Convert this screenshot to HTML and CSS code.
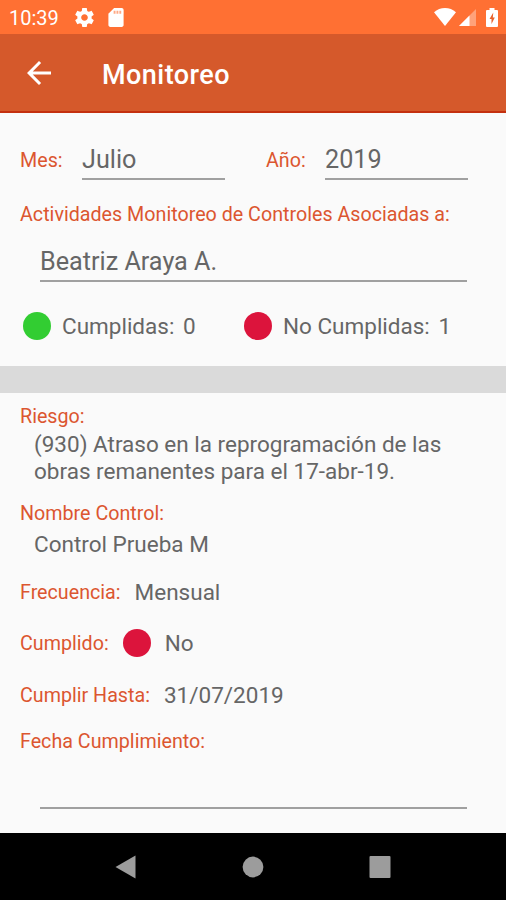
FILE: index.html
```html
<!DOCTYPE html>
<html lang="es">
<head>
    <meta charset="UTF-8">
    <meta name="viewport" content="width=device-width, initial-scale=1.0">
    <title>Monitoreo</title>
    <link rel="stylesheet" href="styles.css">
</head>
<body>
    <div class="status-bar">
        <span class="clock">10:39</span>
        <svg class="gear" viewBox="2 2 20 20"><path fill="#fff" d="M19.43 12.98c.04-.32.07-.64.07-.98s-.03-.66-.07-.98l2.11-1.65c.19-.15.24-.42.12-.64l-2-3.46c-.12-.22-.39-.3-.61-.22l-2.49 1c-.52-.4-1.08-.73-1.69-.98l-.38-2.65C14.46 2.18 14.25 2 14 2h-4c-.25 0-.46.18-.49.42l-.38 2.65c-.61.25-1.17.59-1.69.98l-2.49-1c-.23-.09-.49 0-.61.22l-2 3.46c-.13.22-.07.49.12.64l2.11 1.65c-.04.32-.07.65-.07.98s.03.66.07.98l-2.11 1.65c-.19.15-.24.42-.12.64l2 3.46c.12.22.39.3.61.22l2.49-1c.52.4 1.08.73 1.69.98l.38 2.65c.03.24.24.42.49.42h4c.25 0 .46-.18.49-.42l.38-2.65c.61-.25 1.17-.59 1.69-.98l2.49 1c.23.09.49 0 .61-.22l2-3.46c.12-.22.07-.49-.12-.64l-2.11-1.65zM12 15.5c-1.93 0-3.5-1.57-3.5-3.5s1.57-3.5 3.5-3.5 3.5 1.57 3.5 3.5-1.57 3.5-3.5 3.5z"/></svg>
        <svg class="sd-card" viewBox="4 2 16 20"><path fill="#fff" d="M18 2h-8L4 8v12c0 1.1.9 2 2 2h12c1.1 0 2-.9 2-2V4c0-1.1-.9-2-2-2z"/><path fill="#ff7033" fill-opacity=".6" d="M9.5 5h2v3h-2zM12.500 5h2v3h-2zM15.500 5h2v3h-2z"/></svg>
        <div class="status-icons">
            <svg class="wifi" viewBox="0 0 22 18"><path fill="#fff" d="M0 4.300C3 1.500 7 0 11 0s8 1.500 11 4.300L11 18z"/></svg>
            <svg class="signal" viewBox="0 0 17 17"><path fill="#fff" fill-opacity=".35" d="M17 0v17H0z"/><path fill="#fff" d="M10.500 6.500V17H0z"/></svg>
            <svg class="battery" viewBox="0 0 12 19"><path fill="#fff" d="M3.500 0h5v2H11a1 1 0 0 1 1 1v15a1 1 0 0 1-1 1H1a1 1 0 0 1-1-1V3a1 1 0 0 1 1-1h2.500z"/><path fill="#e8622c" d="M7.300 4.500L3.500 11h2v5l3.300-6.500h-2z"/></svg>
        </div>
    </div>
    <header class="app-bar">
        <svg class="back" viewBox="4 4 16 16"><path fill="#fff" d="M20 11H7.830l5.590-5.590L12 4l-8 8 8 8 1.410-1.410L7.830 13H20z"/></svg>
        <h1>Monitoreo</h1>
    </header>
    <main>
        <section class="summary">
            <div class="period">
                <span class="label label-month">Mes:</span>
                <span class="input">Julio</span>
                <span class="label label-year">Año:</span>
                <span class="input">2019</span>
            </div>
            <p class="label label-person">Actividades Monitoreo de Controles Asociadas a:</p>
            <div class="input input-wide">Beatriz Araya A.</div>
            <div class="counts">
                <span class="dot green"></span>
                <span class="value done">Cumplidas: <b>0</b></span>
                <span class="dot red"></span>
                <span class="value pending">No Cumplidas: <b>1</b></span>
            </div>
        </section>
        <section class="detail">
            <p class="label">Riesgo:</p>
            <p class="value text risk">(930) Atraso en la reprogramación de las<br>obras remanentes para el 17-abr-19.</p>
            <p class="label label-control">Nombre Control:</p>
            <p class="value text control">Control Prueba M</p>
            <div class="row frequency">
                <span class="label">Frecuencia:</span>
                <span class="value">Mensual</span>
            </div>
            <div class="row fulfilled">
                <span class="label">Cumplido:</span>
                <span class="dot red"></span>
                <span class="value">No</span>
            </div>
            <div class="row due">
                <span class="label">Cumplir Hasta:</span>
                <span class="value">31/07/2019</span>
            </div>
            <p class="label label-date">Fecha Cumplimiento:</p>
            <div class="input input-wide input-date"></div>
        </section>
    </main>
    <nav class="nav-bar">
        <svg viewBox="0 0 22 24"><path fill="#9c9c9c" d="M20.500 .500V23.500L.500 12z"/></svg>
        <svg viewBox="0 0 22 24"><circle cx="11" cy="12" r="10.400" fill="#9c9c9c"/></svg>
        <svg viewBox="0 0 22 24"><rect x=".5" y="1" width="21" height="22" rx="1" fill="#9c9c9c"/></svg>
    </nav>
</body>
</html>
```
FILE: styles.css
```css
* {
    margin: 0;
    padding: 0;
    box-sizing: border-box;
}
body {
    width: 506px;
    height: 900px;
    overflow: hidden;
    font-family: Roboto, sans-serif;
    background-color: #fafafa;
    color: #666;
    white-space: nowrap;
}
svg {
    display: block;
    flex: none;
}
.status-bar {
    display: flex;
    align-items: center;
    height: 34px;
    padding: 0 8px 0 9px;
    background-color: #ff7033;
    color: #fff;
}
.clock {
    width: 66px;
    font-size: 20px;
    padding-top: 2px;
}
.gear {
    width: 19px;
    height: 19px;
}
.sd-card {
    width: 16px;
    height: 19px;
    margin-left: 14px;
}
.status-icons {
    display: flex;
    align-items: center;
    margin-left: auto;
}
.wifi {
    width: 22px;
    height: 18px;
}
.signal {
    width: 17px;
    height: 17px;
    margin-left: 3px;
}
.battery {
    width: 12px;
    height: 19px;
    margin-left: 10px;
}
.app-bar {
    display: flex;
    align-items: center;
    height: 79px;
    padding-left: 27px;
    background-color: #d5592b;
    border-bottom: 2px solid #c4300f;
    color: #fff;
}
.back {
    width: 24px;
    height: 24px;
}
h1 {
    margin-left: 51px;
    padding-top: 4px;
    font-size: 27px;
    font-weight: 500;
    letter-spacing: 0.45px;
}
.label {
    padding-top: 2px;
    font-size: 19.7px;
    line-height: 22px;
    color: #dc5630;
}
.value {
    font-size: 22.5px;
    line-height: 27px;
}
.input {
    width: 143px;
    height: 40px;
    font-size: 25.2px;
    line-height: 40px;
    border-bottom: 2px solid #a0a0a0;
}
.input-wide {
    width: 427px;
    margin-left: 20px;
}
.dot {
    width: 28px;
    height: 28px;
    border-radius: 50%;
}
.green {
    background-color: #32cd32;
}
.red {
    background-color: #dc143c;
}
.summary {
    height: 253px;
    padding: 27px 20px 0;
}
.period {
    display: flex;
    align-items: center;
}
.label-month {
    width: 62px;
}
.label-year {
    width: 59px;
    margin-left: 41px;
}
.label-person {
    margin: 22px 0 16px;
}
.counts {
    display: flex;
    align-items: center;
    margin-top: 30px;
    padding-left: 3px;
}
.counts b {
    font-weight: inherit;
    margin-left: 3px;
}
.counts .value {
    padding: 1px 0 0 11px;
}
.done {
    width: 193px;
}
.detail {
    height: 467px;
    padding: 11px 20px 0;
    border-top: 27px solid #dadada;
}
.text {
    padding-left: 14px;
}
.risk {
    margin-top: 3px;
}
.label-control {
    margin-top: 16px;
}
.control {
    margin-top: 6px;
}
.row {
    display: flex;
    align-items: center;
    gap: 14px;
    height: 28px;
}
.row .value {
    padding-top: 1px;
}
.frequency {
    margin-top: 20px;
}
.fulfilled {
    margin-top: 23px;
}
.due {
    margin-top: 24px;
}
.label-date {
    margin-top: 20px;
}
.input-date {
    margin-top: 16px;
}
.nav-bar {
    display: flex;
    justify-content: center;
    align-items: center;
    gap: 105px;
    height: 67px;
    background-color: #000;
}
.nav-bar svg {
    width: 22px;
    height: 24px;
}
```
